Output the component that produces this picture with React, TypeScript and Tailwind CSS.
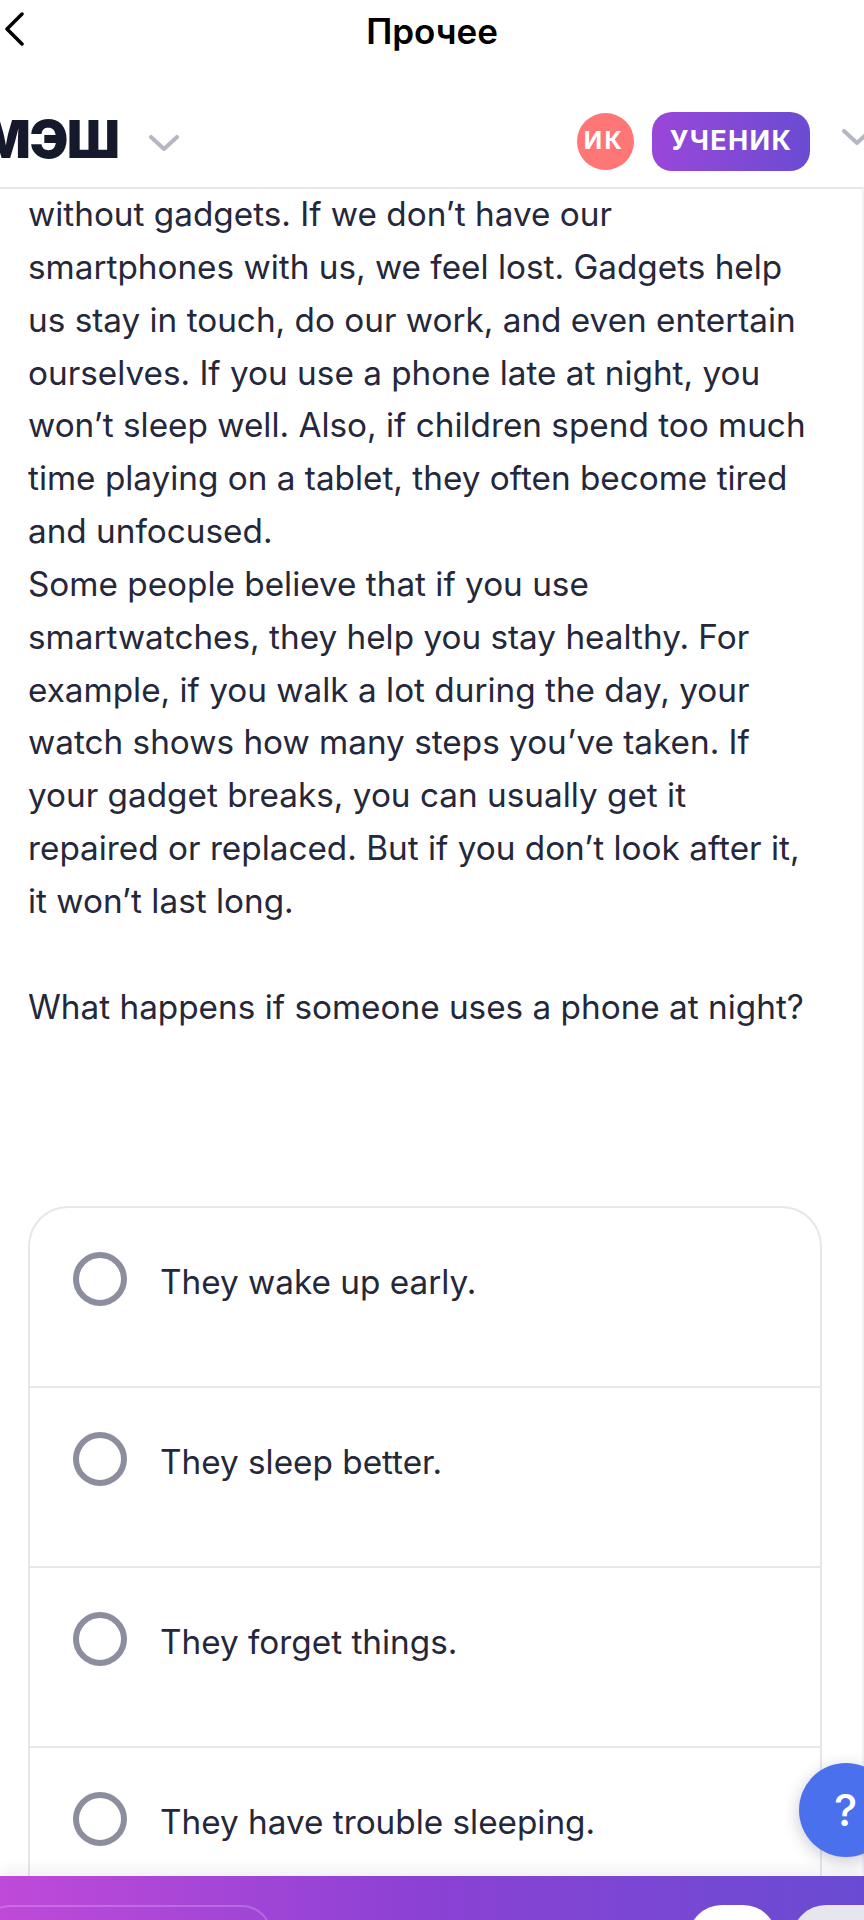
const lines1 = [
  'without gadgets. If we don’t have our',
  'smartphones with us, we feel lost. Gadgets help',
  'us stay in touch, do our work, and even entertain',
  'ourselves. If you use a phone late at night, you',
  'won’t sleep well. Also, if children spend too much',
  'time playing on a tablet, they often become tired',
  'and unfocused.',
  'Some people believe that if you use',
  'smartwatches, they help you stay healthy. For',
  'example, if you walk a lot during the day, your',
  'watch shows how many steps you’ve taken. If',
  'your gadget breaks, you can usually get it',
  'repaired or replaced. But if you don’t look after it,',
  'it won’t last long.',
];

const answers = ['They wake up early.', 'They sleep better.', 'They forget things.', 'They have trouble sleeping.'];

function Caret({ className }: { className: string }) {
  return (
    <svg width="30" height="16" viewBox="0 0 30 16" fill="none" className={className}>
      <path d="M2 2l13 12L28 2" stroke="#b4b6c4" strokeWidth="4" strokeLinecap="round" strokeLinejoin="round" />
    </svg>
  );
}

export default function App() {
  return (
    <div className="relative h-[1920px] w-[864px] overflow-hidden bg-white font-['Inter',sans-serif] text-[#25273a]">
      {/* iOS nav bar */}
      <div className="relative flex h-[62px] items-center justify-center">
        <svg width="20" height="34" viewBox="0 0 20 34" fill="none" className="absolute left-[4px] top-[12px]">
          <path d="M18 2L3 17l15 15" stroke="#000" strokeWidth="3.5" strokeLinecap="round" strokeLinejoin="round" />
        </svg>
        <span className="text-[35px] font-semibold text-black">Прочее</span>
      </div>

      {/* App header */}
      <div className="flex h-[127px] border-b-2 border-[#e6e6ec]">
        <div className="flex items-center pt-[31px]">
          <span className="ml-[-19px] text-[52px] leading-none font-black tracking-tight text-[#16182b]">МЭШ</span>
          <Caret className="ml-[30px] mt-[6px]" />
        </div>
        <div className="ml-auto flex items-center pt-[33px]">
          <div className="flex h-[57px] w-[57px] items-center justify-center rounded-full bg-[#ff7676] pr-[3px] text-[24px] font-bold tracking-widest text-white">ИК</div>
          <div className="ml-[18px] flex h-[59px] w-[158px] items-center justify-center rounded-[20px] bg-gradient-to-r from-[#9a46d9] to-[#6a4bd2] text-[27px] font-bold tracking-wider text-white">УЧЕНИК</div>
          <Caret className="ml-[32px] mr-[-8px] mt-[-8px]" />
        </div>
      </div>

      {/* Reading text */}
      <div className="border-r-2 border-[#f1f1f5]">
        <div className="-mt-[1px] px-[28px] text-[33.3px] leading-[52.85px]">
          {lines1.map((line) => (
            <div key={line} className="whitespace-nowrap">{line}</div>
          ))}
          <div className="mt-[52.85px] whitespace-nowrap">What happens if someone uses a phone at night?</div>
        </div>

        {/* Answers */}
        <div className="ml-[28px] mr-[40px] mt-[172px] rounded-t-[40px] border-x-2 border-t-2 border-[#e6e6ec]">
          {answers.map((answer, i) => (
            <div key={answer} className={`flex h-[180px] items-start gap-[33px] pl-[43px] pt-[44px] ${i < 3 ? 'border-b-2 border-[#e6e6ec]' : ''}`}>
              <div className="h-[54px] w-[54px] shrink-0 rounded-full border-[6px] border-[#8c8d9e]" />
              <span className="mt-[6px] text-[33.3px] leading-[48px]">{answer}</span>
            </div>
          ))}
        </div>
      </div>

      {/* Help button */}
      <div className="absolute left-[799px] top-[1763px] flex h-[94px] w-[94px] items-center rounded-full bg-[#4a70ee] pl-[35px] text-[44px] font-medium text-white shadow-[0_4px_16px_rgba(40,40,80,0.25)]">?</div>

      {/* Bottom bar */}
      <div className="absolute inset-x-0 bottom-0 flex h-[44px] items-start justify-end bg-gradient-to-r from-[#c049d9] via-[#8a41d4] to-[#694bd2] pt-[29px] shadow-[0_-6px_12px_rgba(40,40,80,0.07)]">
        <div className="absolute left-[-20px] top-[29px] h-[40px] w-[292px] rounded-t-[30px] border-2 border-b-0 border-white/20" />
        <div className="h-[40px] w-[89px] rounded-t-[34px] bg-white" />
        <div className="ml-[15px] mr-[-40px] h-[40px] w-[112px] rounded-t-[34px] bg-[#e6e6ee]" />
      </div>
    </div>
  );
}
